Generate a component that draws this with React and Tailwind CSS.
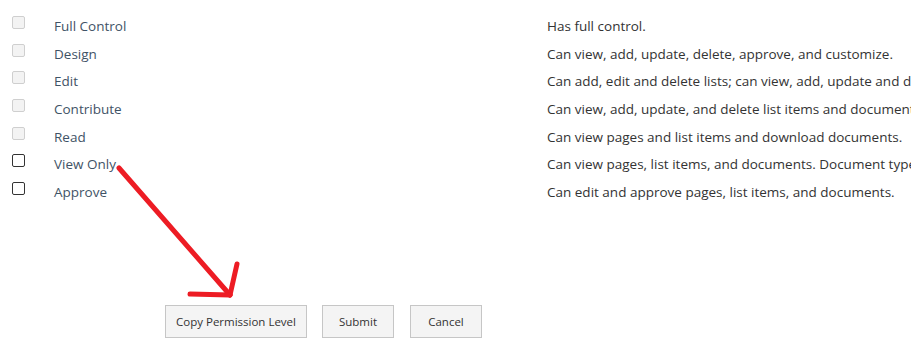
import React from "react";

const rows = [
  ["Full Control", "Has full control.", true],
  ["Design", "Can view, add, update, delete, approve, and customize.", true],
  ["Edit", "Can add, edit and delete lists; can view, add, update and delete list items and documents.", true],
  ["Contribute", "Can view, add, update, and delete list items and documents.", true],
  ["Read", "Can view pages and list items and download documents.", true],
  ["View Only", "Can view pages, list items, and documents. Document types with server-side file handlers can be viewed in the browser but not downloaded.", false],
  ["Approve", "Can edit and approve pages, list items, and documents.", false],
];

export default function App() {
  return (
    <div
      className="relative w-[911px] h-[363px] bg-white overflow-hidden"
      style={{ fontFamily: '"Open Sans", "Noto Sans", sans-serif' }}
    >
      <div className="pt-[12px]">
        {rows.map(([label, desc, disabled]) => (
          <div key={label} className="flex h-[27.67px]">
            <div className="w-[54px] shrink-0 pl-[12px] pt-[4px]">
              <div
                className={
                  disabled
                    ? "w-[13px] h-[13px] rounded-[2px] border border-[#cfcfcf] bg-[#f3f3f3]"
                    : "w-[13px] h-[13px] rounded-[2px] border border-[#333] bg-white"
                }
              />
            </div>
            <div className="w-[493px] shrink-0 text-[13.5px] leading-[28px] text-[#3f5366]">
              {label}
            </div>
            <div className="flex-1 whitespace-nowrap overflow-hidden text-[13.5px] leading-[28px] text-[#333]">
              {desc}
            </div>
          </div>
        ))}
      </div>
      <div className="flex mt-[99px] pl-[165px] gap-[15px] text-[11.5px] text-[#333]">
        <button className="w-[142px] h-[33px] border border-[#c6c6c6] bg-[#f4f4f4] pt-[1px]">Copy Permission Level</button>
        <button className="w-[72px] h-[33px] border border-[#c6c6c6] bg-[#f4f4f4] pt-[1px]">Submit</button>
        <button className="ml-[1px] w-[72px] h-[33px] border border-[#c6c6c6] bg-[#f4f4f4] pt-[1px]">Cancel</button>
      </div>
      <svg className="absolute left-0 top-0" width="911" height="363" viewBox="0 0 911 363">
        <g stroke="#ed1c24" strokeWidth="5" strokeLinecap="round" fill="none">
          <line x1="119" y1="168" x2="230" y2="295" />
          <line x1="237" y1="264" x2="230" y2="295" />
          <line x1="190" y1="294" x2="230" y2="295" />
        </g>
      </svg>
    </div>
  );
}
